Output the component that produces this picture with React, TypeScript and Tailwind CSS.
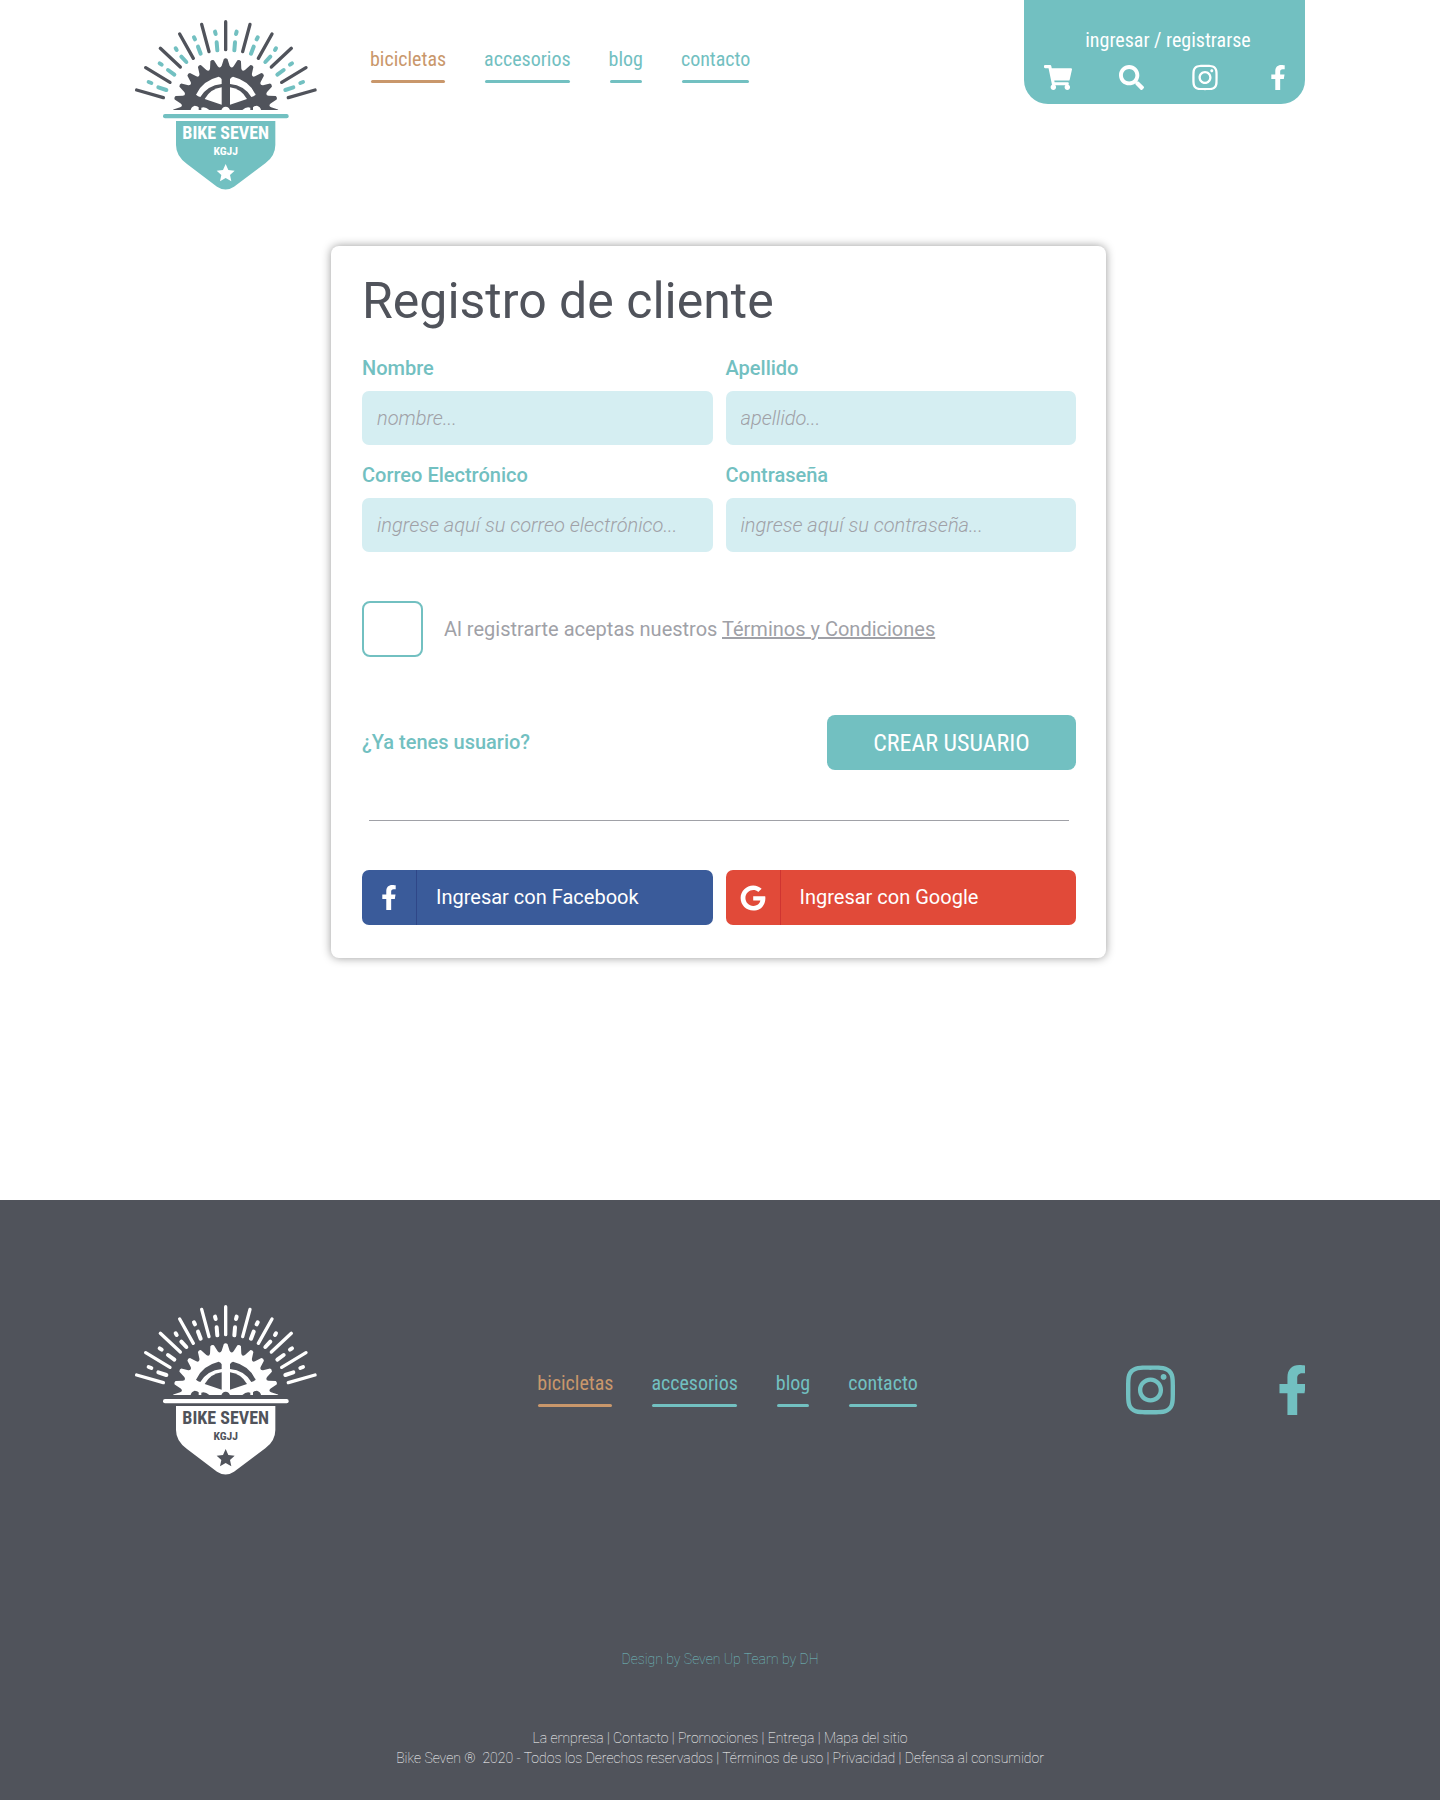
import { FaFacebookF, FaGoogle, FaInstagram, FaSearch, FaShoppingCart } from "react-icons/fa";

const RAYS = [
  [245, 43, 267, 125],
  [179, 72, 220, 145],
  [121, 115, 181, 171],
  [77, 173, 150, 217],
  [50, 240, 130, 263],
];

const DASHES = [
  [285, 65, 287, 72],
  [290, 97, 292, 121],
  [222, 82, 225, 88],
  [234, 110, 242, 131],
  [167, 115, 170, 120],
  [184, 140, 199, 156],
  [119, 160, 125, 164],
  [144, 180, 163, 194],
  [86, 216, 94, 219],
  [115, 232, 139, 240],
];

function gearOutline() {
  const cx = 317;
  const cy = 304;
  const point = (radius: number, degrees: number) => {
    const a = (degrees * Math.PI) / 180;
    return `${(cx + radius * Math.cos(a)).toFixed(1)} ${(cy - radius * Math.sin(a)).toFixed(1)}`;
  };
  let d = `M${point(133, 187.5)}`;
  for (let i = 12; i >= 0; i--) {
    const a = i * 15;
    d += `L${point(137, a + 5)}L${point(157, a + 2)}Q${point(161, a)} ${point(157, a - 2)}L${point(137, a - 5)}Q${point(128, a - 7.5)} ${point(137, a - 10)}`;
  }
  return d + "Z";
}

function Spokes({ color }: { color: string }) {
  return (
    <g fill={color}>
      <path d="M228 254Q246 212 296 200Q303 202 305 208V222Q262 226 241 261Q234 260 228 254Z" />
      <path d="M254 267Q272 236 305 232V284Z" />
      <path d="M212 300Q214 290 224 287Q232 287 236 292V300Z" />
      <path d="M244 300V293Q256 289 268 300Z" />
    </g>
  );
}

type LogoProps = { id: string; gear: string; accent: string; paper: string };

function Logo({ id, gear, accent, paper }: LogoProps) {
  return (
    <svg viewBox="45 30 546 510" className="block h-[170px] w-[182px]" role="img" aria-label="Bike Seven KGJJ">
      <defs>
        <clipPath id={id}>
          <rect x="140" y="130" width="360" height="170" />
        </clipPath>
      </defs>
      {["", "matrix(-1 0 0 1 635 0)"].map((flip) => (
        <g key={flip} transform={flip} strokeLinecap="round">
          {RAYS.map(([x1, y1, x2, y2]) => (
            <line key={x1} x1={x1} y1={y1} x2={x2} y2={y2} stroke={gear} strokeWidth="10" />
          ))}
          {DASHES.map(([x1, y1, x2, y2]) => (
            <line key={x1} x1={x1} y1={y1} x2={x2} y2={y2} stroke={accent} strokeWidth="12" />
          ))}
        </g>
      ))}
      <line x1="317" y1="35" x2="317" y2="119" stroke={gear} strokeWidth="10" strokeLinecap="round" />
      <g clipPath={`url(#${id})`}>
        <path d={gearOutline()} fill={gear} />
        <Spokes color={paper} />
        <g transform="matrix(-1 0 0 1 635 0)">
          <Spokes color={paper} />
        </g>
        <circle cx="317" cy="303" r="13" fill={paper} />
      </g>
      <rect x="129" y="312" width="377" height="13" rx="6" fill={accent} />
      <path d="M168 333H466V405Q466 438 436 460L342 530Q317 547 291 530L200 461Q168 438 168 405Z" fill={accent} />
      <g fill={paper} textAnchor="middle" className="font-['Roboto_Condensed','Roboto'] font-bold">
        <text x="317" y="387" fontSize="54">BIKE SEVEN</text>
        <text x="317" y="436" fontSize="35">KGJJ</text>
      </g>
      <path d="M317 462L325 480L344 482L330 495L334 514L317 504L300 514L304 495L290 482L309 480Z" fill={paper} />
    </svg>
  );
}

const LINKS = ["bicicletas", "accesorios", "blog", "contacto"];

function Nav({ label }: { label: string }) {
  return (
    <nav aria-label={label}>
      <ul className="flex gap-[38px] font-['Roboto_Condensed','Roboto',sans-serif] text-xl font-normal">
        {LINKS.map((link, i) => (
          <li key={link}>
            <a href="#" className={`block ${i === 0 ? "text-[#c9976b]" : "text-[#72c0c1]"}`}>
              {link}
              <span className={`mx-px mt-[7px] block h-[3px] rounded-full ${i === 0 ? "bg-[#c9976b]" : "bg-[#72c0c1]"}`} />
            </a>
          </li>
        ))}
      </ul>
    </nav>
  );
}

type FieldProps = { id: string; label: string; type: string; placeholder: string };

function Field({ id, label, type, placeholder }: FieldProps) {
  return (
    <div>
      <label htmlFor={id} className="block text-xl leading-6 font-medium text-[#72c0c1]">
        {label}
      </label>
      <input
        id={id}
        type={type}
        placeholder={placeholder}
        className="mt-[11px] block h-[54px] w-full rounded-[7px] bg-[#d5eef2] px-[15px] text-xl font-light italic text-[#50535b] outline-none placeholder:text-[#a0a1a7]"
      />
    </div>
  );
}

export default function App() {
  return (
    <div className="flex min-h-screen flex-col bg-white font-['Roboto',sans-serif] text-[#50535b]">
      <header className="mx-auto flex w-full max-w-[1170px] items-start">
        <a href="#" className="pt-5">
          <Logo id="gear-top" gear="#50535b" accent="#72c0c1" paper="#ffffff" />
        </a>
        <div className="ml-[53px] pt-[45px]">
          <Nav label="Principal" />
        </div>
        <div className="ml-auto w-[281px] rounded-b-3xl bg-[#72c0c1] pt-[26px] pr-[13px] pb-[14px] pl-5 text-white">
          <a href="#" className="block text-center font-['Roboto_Condensed','Roboto',sans-serif] text-xl font-normal">
            ingresar / registrarse
          </a>
          <div className="mt-[10px] flex h-[26px] items-center justify-between">
            <a href="#" aria-label="Carrito" className="flex w-7 justify-center"><FaShoppingCart className="h-[25px] w-7" /></a>
            <a href="#" aria-label="Buscar" className="flex w-7 justify-center"><FaSearch className="size-[25px]" /></a>
            <a href="#" aria-label="Instagram" className="flex w-7 justify-center"><FaInstagram className="h-[29px] w-[26px]" /></a>
            <a href="#" aria-label="Facebook" className="flex w-7 justify-center"><FaFacebookF className="h-[25px] w-4" /></a>
          </div>
        </div>
      </header>

      <main className="flex-1 pt-14 pr-[3px]">
        <form
          className="mx-auto max-w-[775px] rounded-lg bg-white pt-[25px] pr-[30px] pb-[33px] pl-[31px] shadow-[0_0_10px_rgba(0,0,0,0.4)]"
          onSubmit={(e) => e.preventDefault()}
        >
          <h1 className="text-[50px] leading-[60px]">Registro de cliente</h1>
          <div className="mt-[25px] grid grid-cols-2 gap-x-[13px] gap-y-[18px]">
            <Field id="nombre" label="Nombre" type="text" placeholder="nombre..." />
            <Field id="apellido" label="Apellido" type="text" placeholder="apellido..." />
            <Field id="correo" label="Correo Electrónico" type="email" placeholder="ingrese aquí su correo electrónico..." />
            <Field id="clave" label="Contraseña" type="password" placeholder="ingrese aquí su contraseña..." />
          </div>
          <div className="mt-[49px] flex items-center gap-[21px] text-xl text-[#a0a1a7]">
            <input
              id="terminos"
              type="checkbox"
              className="h-14 w-[61px] appearance-none rounded-lg border-2 border-[#72c0c1] checked:bg-[#72c0c1]"
            />
            <label htmlFor="terminos">
              Al registrarte aceptas nuestros{" "}
              <a href="#" className="underline">Términos y Condiciones</a>
            </label>
          </div>
          <div className="mt-[58px] flex items-center justify-between">
            <a href="#" className="pb-0.5 text-xl font-medium text-[#72c0c1]">¿Ya tenes usuario?</a>
            <button
              type="submit"
              className="h-[55px] w-[249px] rounded-lg bg-[#72c0c1] font-['Roboto_Condensed','Roboto',sans-serif] text-2xl font-normal text-white"
            >
              CREAR USUARIO
            </button>
          </div>
          <hr className="mx-[7px] mt-[50px] border-[#a0a1a7]" />
          <div className="mt-[49px] grid grid-cols-2 gap-[13px] text-xl text-white">
            <button type="button" className="flex h-[55px] items-center rounded-[7px] bg-[#3a5b9a]">
              <span className="flex h-full w-[55px] items-center justify-center border-r border-[#2f4788]">
                <FaFacebookF className="h-[25px] w-4" />
              </span>
              <span className="pb-0.5 pl-[19px]">Ingresar con Facebook</span>
            </button>
            <button type="button" className="flex h-[55px] items-center rounded-[7px] bg-[#e14a39]">
              <span className="flex h-full w-[55px] items-center justify-center border-r border-[#cf3431]">
                <FaGoogle className="size-[26px]" />
              </span>
              <span className="pb-0.5 pl-[19px]">Ingresar con Google</span>
            </button>
          </div>
        </form>
      </main>

      <footer className="bg-[#50535b] pt-[105px] pb-8">
        <div className="mx-auto flex w-full max-w-[1170px] items-center justify-between">
          <a href="#">
            <Logo id="gear-bottom" gear="#ffffff" accent="#ffffff" paper="#50535b" />
          </a>
          <div className="pb-[5px] pl-3">
            <Nav label="Pie de página" />
          </div>
          <div className="flex items-center gap-[104px] pb-px text-[#72c0c1]">
            <a href="#" aria-label="Instagram"><FaInstagram className="h-14 w-[49px]" /></a>
            <a href="#" aria-label="Facebook"><FaFacebookF viewBox="22 0 258 512" className="h-[50px] w-[26px]" /></a>
          </div>
        </div>
        <p className="mt-[174px] text-center text-sm font-thin text-[#72c0c1]">Design by Seven Up Team by DH</p>
        <div className="mt-[59px] text-center text-sm font-thin text-white">
          <p>La empresa | Contacto | Promociones | Entrega | Mapa del sitio</p>
          <p>Bike Seven ®&nbsp; 2020 - Todos los Derechos reservados | Términos de uso | Privacidad | Defensa al consumidor</p>
        </div>
      </footer>
    </div>
  );
}
